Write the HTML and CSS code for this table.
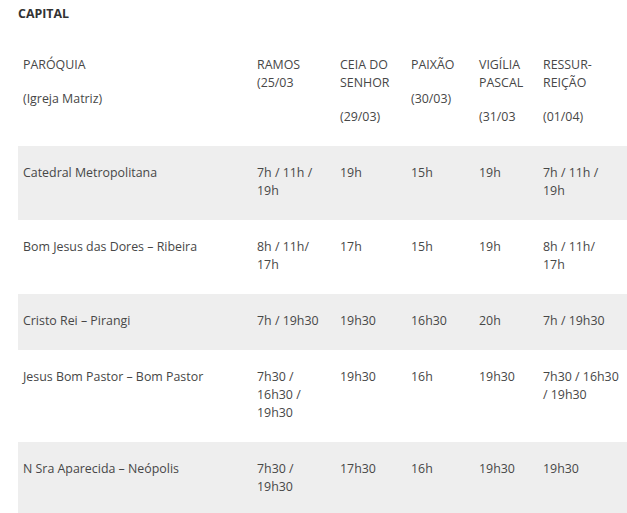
FILE: index.html
```html
<!DOCTYPE html>
<html lang="pt">
<head>
<meta charset="utf-8">
<link rel="stylesheet" href="styles.css">
</head>
<body>
<div class="page">
  <h4 class="title">CAPITAL</h4>
  <table class="schedule">
    <colgroup>
      <col class="c1"><col class="c2"><col class="c3"><col class="c4"><col class="c5"><col class="c6">
    </colgroup>
    <thead>
      <tr>
        <td><p>PARÓQUIA</p><p>(Igreja Matriz)</p></td>
        <td><p>RAMOS (25/03</p></td>
        <td><p>CEIA DO SENHOR</p><p>(29/03)</p></td>
        <td><p>PAIXÃO</p><p>(30/03)</p></td>
        <td><p>VIGÍLIA PASCAL</p><p>(31/03</p></td>
        <td><p>RESSUR-REIÇÃO</p><p>(01/04)</p></td>
      </tr>
    </thead>
    <tbody>
      <tr>
        <td>Catedral Metropolitana</td>
        <td>7h / 11h / 19h</td>
        <td>19h</td>
        <td>15h</td>
        <td>19h</td>
        <td>7h / 11h / 19h</td>
      </tr>
      <tr>
        <td>Bom Jesus das Dores – Ribeira</td>
        <td>8h / 11h/ 17h</td>
        <td>17h</td>
        <td>15h</td>
        <td>19h</td>
        <td>8h / 11h/ 17h</td>
      </tr>
      <tr>
        <td>Cristo Rei – Pirangi</td>
        <td>7h / 19h30</td>
        <td>19h30</td>
        <td>16h30</td>
        <td>20h</td>
        <td>7h / 19h30</td>
      </tr>
      <tr>
        <td>Jesus Bom Pastor – Bom Pastor</td>
        <td>7h30 / 16h30 / 19h30</td>
        <td>19h30</td>
        <td>16h</td>
        <td>19h30</td>
        <td>7h30 / 16h30 / 19h30</td>
      </tr>
      <tr>
        <td>N Sra Aparecida – Neópolis</td>
        <td>7h30 / 19h30</td>
        <td>17h30</td>
        <td>16h</td>
        <td>19h30</td>
        <td>19h30</td>
      </tr>
    </tbody>
  </table>
</div>
</body>
</html>
```

FILE: styles.css
```css
html, body {
  margin: 0;
  padding: 0;
  background: #ffffff;
}

body {
  font-family: "Open Sans", "Liberation Sans", sans-serif;
  font-size: 12.4px;
  line-height: 18px;
  color: #474747;
  overflow: hidden;
}

.page {
  padding: 5px 0 0 18px;
}

.title {
  margin: 0;
  font-size: 12.4px;
  line-height: 18px;
  font-weight: 700;
  color: #333333;
}

.schedule {
  margin-top: 15px;
  width: 609px;
  table-layout: fixed;
  border-collapse: collapse;
  border-spacing: 0;
}

.c1 { width: 234px; }
.c2 { width: 83px; }
.c3 { width: 71px; }
.c4 { width: 68px; }
.c5 { width: 64px; }
.c6 { width: 89px; }

.schedule td {
  padding: 18px 5px 20px 5px;
  vertical-align: top;
  text-align: left;
}

.schedule td:last-child {
  padding-right: 8px;
}

.schedule p {
  margin: 0 0 16px 0;
}

.schedule p:last-child {
  margin-bottom: 0;
}

.schedule tbody tr:nth-child(odd) {
  background: #eeeeee;
}
```
